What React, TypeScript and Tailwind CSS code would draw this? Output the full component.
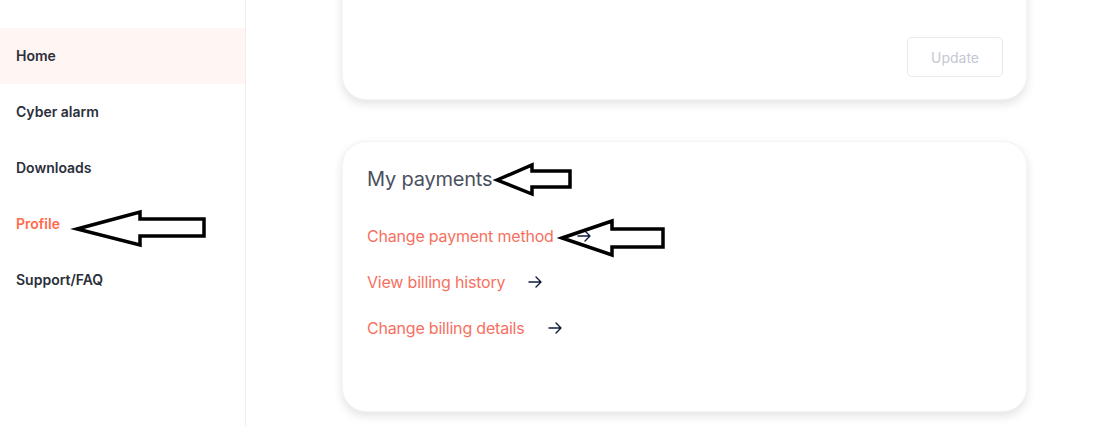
import React from "react";

const navItems = ["Home", "Cyber alarm", "Downloads", "Profile", "Support/FAQ"];

function ArrowRight() {
  return (
    <svg width="16" height="16" viewBox="0 0 16 16" fill="none" stroke="#0f1b3d" strokeWidth="1.4" strokeLinecap="round" strokeLinejoin="round">
      <path d="M2 8h12M9 3l5 5-5 5" />
    </svg>
  );
}

function Annot({ points }: { points: string }) {
  return (
    <polygon points={points} fill="none" stroke="black" strokeWidth="3.5" strokeLinejoin="miter" />
  );
}

export default function App() {
  const links = ["Change payment method", "View billing history", "Change billing details"];
  return (
    <div className="relative w-[1098px] h-[426px] overflow-hidden bg-white flex" style={{ fontFamily: "Inter, 'Noto Sans', sans-serif" }}>
      <aside className="w-[246px] shrink-0 border-r border-[#eeeeee] pt-[28px] flex flex-col">
        {navItems.map((n, i) => (
          <div
            key={n}
            className={`h-[56px] flex items-center pl-4 pb-[1px] text-[14px] font-semibold ${i === 0 ? "bg-[#fff5f2]" : ""} ${n === "Profile" ? "text-[#ff6a4b]" : "text-[#2a2f3a]"}`}
          >
            {n}
          </div>
        ))}
      </aside>
      <main className="flex-1 flex flex-col pl-[96px]">
        <div className="-mt-[40px] w-[685px] h-[140px] bg-white rounded-[24px] shadow-[0_4px_10px_rgba(15,23,42,0.12)] flex items-end justify-end pr-[23px] pb-[22px] border border-[#f3f4f6]">
          <button className="w-[96px] h-[40px] border border-[#e8eaf0] rounded-[5px] text-[14px] text-[#c4c8d2]">Update</button>
        </div>
        <div className="mt-[41px] w-[685px] h-[271px] bg-white rounded-[24px] shadow-[0_4px_10px_rgba(15,23,42,0.12)] border border-[#f3f4f6] pl-[24px] pt-[23px]">
          <h2 className="text-[20px] text-[#4b5060] leading-[28px] tracking-[-0.2px]">My payments</h2>
          <div className="mt-[31px] flex flex-col gap-[22px]">
            {links.map((l) => (
              <div key={l} className="flex items-center gap-[22px] h-[24px]">
                <span className="text-[16px] text-[#f7705f] tracking-[-0.2px]">{l}</span>
                <ArrowRight />
              </div>
            ))}
          </div>
        </div>
      </main>
      <svg className="absolute inset-0 pointer-events-none" width="1098" height="426">
        <Annot points="77,229 140,212 140,219 204,219 204,236 140,236 140,245" />
        <Annot points="497,180 532,165 532,171 570,171 570,187 532,187 532,194" />
        <Annot points="562,238 612,221 612,229 663,229 663,247 612,247 612,255" />
      </svg>
    </div>
  );
}
